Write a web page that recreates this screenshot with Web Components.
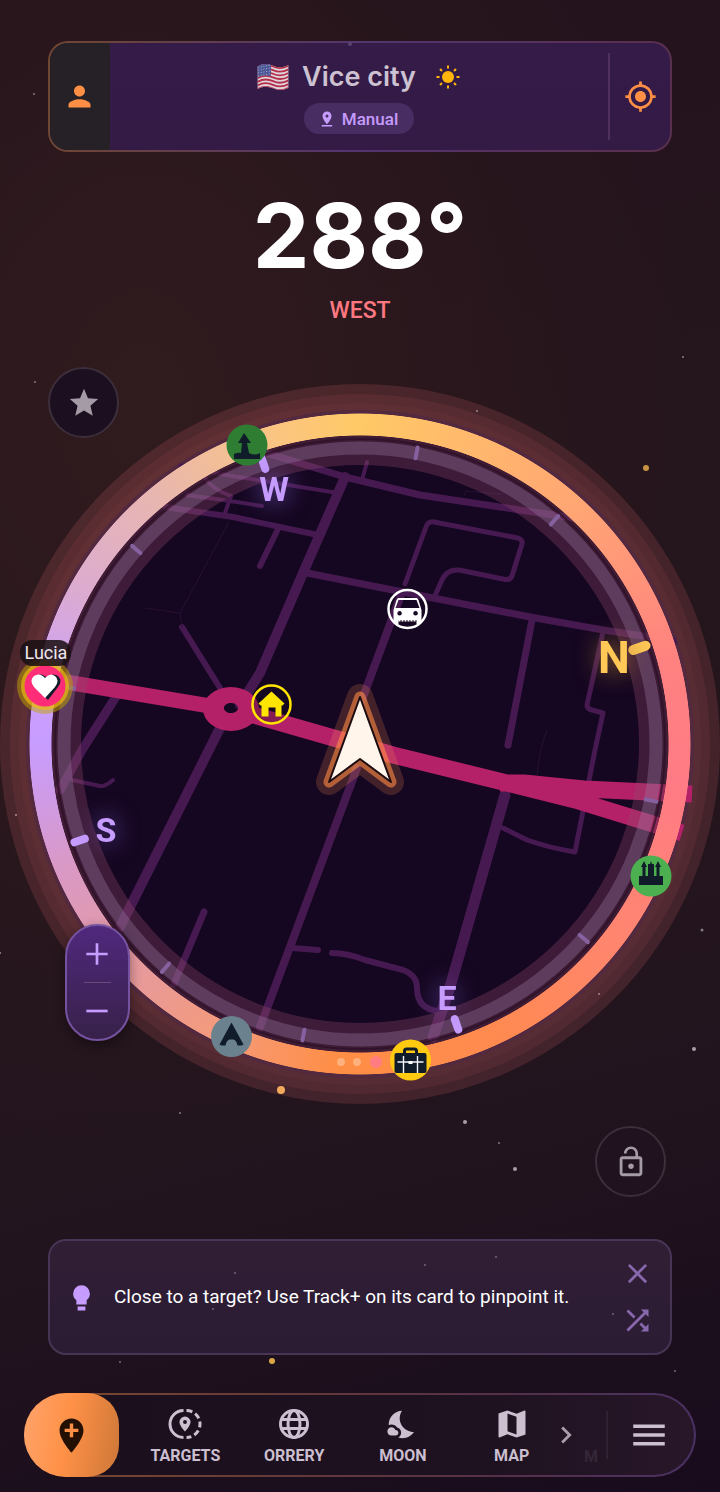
<!DOCTYPE html>
<html lang="en">
<head>
<meta charset="utf-8">
<meta name="viewport" content="width=device-width, initial-scale=1">
<title>Compass</title>
<style>
   body {
      margin: 0;
      background: #1b0d1b;
      font-family: Roboto, "Liberation Sans", sans-serif;
   }
</style>
</head>
<body>
<compass-app></compass-app>

<script>
// every glyph is drawn on a 24 unit grid
const ICONS = {
   person: '<path d="M12 12c2.21 0 4-1.79 4-4s-1.79-4-4-4-4 1.79-4 4 1.79 4 4 4zm0 2c-2.67 0-8 1.34-8 4v2h16v-2c0-2.66-5.33-4-8-4z"/>',
   locate: '<path d="M12 8c-2.21 0-4 1.79-4 4s1.79 4 4 4 4-1.79 4-4-1.79-4-4-4zm8.94 3A8.994 8.994 0 0 0 13 3.06V1h-2v2.06A8.994 8.994 0 0 0 3.06 11H1v2h2.06A8.994 8.994 0 0 0 11 20.94V23h2v-2.06A8.994 8.994 0 0 0 20.94 13H23v-2h-2.06zM12 19c-3.87 0-7-3.13-7-7s3.13-7 7-7 7 3.13 7 7-3.13 7-7 7z"/>',
   sun: '<circle cx="12" cy="12" r="6"/><path fill="none" stroke="currentColor" stroke-width="2" d="M12 .5v3M12 20.500v3M.5 12h3M20.500 12h3M4 4l2 2M18 18l2 2M4 20l2-2M18 6l2-2"/>',
   pin: '<path fill-rule="evenodd" d="M18 8c0-3.310-2.690-6-6-6S6 4.690 6 8c0 4.500 6 11 6 11s6-6.500 6-11zm-8 0a2 2 0 1 1 4 0 2 2 0 0 1-4 0zM5 20v2h14v-2H5z"/>',
   star: '<path d="M12 17.270 18.180 21l-1.640-7.030L22 9.240l-7.190-.610L12 2 9.190 8.630 2 9.240l5.460 4.730L5.820 21z"/>',
   unlock: '<path d="M12 17c1.100 0 2-.900 2-2s-.900-2-2-2-2 .900-2 2 .900 2 2 2zm6-9h-1V6c0-2.760-2.240-5-5-5S7 3.240 7 6h1.900c0-1.710 1.390-3.100 3.100-3.100 1.710 0 3.100 1.390 3.100 3.100v2H6c-1.100 0-2 .900-2 2v10c0 1.100.900 2 2 2h12c1.100 0 2-.900 2-2V10c0-1.100-.900-2-2-2zm0 12H6V10h12v10z"/>',
   bulb: '<path d="M12 2.500a6.500 6.500 0 0 0-6.500 6.500c0 2.300 1 3.800 2.500 5v3.500h8V14c1.500-1.200 2.500-2.700 2.500-5A6.500 6.500 0 0 0 12 2.500zM9 19h6v3H9z"/>',
   close: '<path d="M19 6.410 17.590 5 12 10.590 6.410 5 5 6.410 10.590 12 5 17.590 6.410 19 12 13.410 17.590 19 19 17.590 13.410 12z"/>',
   shuffle: '<path d="M10.590 9.170 5.410 4 4 5.410l5.170 5.170 1.420-1.410zM14.500 4l2.040 2.040L4 18.590 5.410 20 17.960 7.460 20 9.500V4h-5.500zm.330 9.410-1.410 1.410 3.130 3.130L14.500 20H20v-5.500l-2.040 2.040-3.130-3.130z"/>',
   addpin: '<path d="M12 2C8.130 2 5 5.130 5 9c0 5.250 7 13 7 13s7-7.750 7-13c0-3.870-3.130-7-7-7zm4 8h-3v3h-2v-3H8V8h3V5h2v3h3v2z"/>',
   targets: '<path fill="none" stroke="currentColor" stroke-width="2" d="M11 3a9 9 0 0 0 0 18"/><path fill="none" stroke="currentColor" stroke-width="2" stroke-dasharray="4 2.200" d="M13 3a9 9 0 0 1 0 18"/><path fill-rule="evenodd" d="M15.700 10.700a3.700 3.700 0 0 0-7.400 0c0 2.600 3.700 6.300 3.700 6.300s3.700-3.700 3.700-6.300zm-5 0a1.300 1.300 0 1 1 2.600 0 1.300 1.300 0 0 1-2.600 0z"/>',
   globe: '<g fill="none" stroke="currentColor" stroke-width="2"><circle cx="12" cy="12" r="9"/><ellipse cx="12" cy="12" rx="4" ry="9"/><path d="M3.500 9h17M3.500 15h17"/></g>',
   moon: '<path d="M11.100 12.080c-2.330-4.510-.5-8.480.530-10.070C6.270 2.200 1.980 6.590 1.980 12c0 .140.020.280.020.420.620-.270 1.290-.420 2-.420 1.660 0 3.180.830 4.100 2.150A4.010 4.010 0 0 1 11 18c0 1.520-.870 2.830-2.120 3.510.980.320 2.030.5 3.110.5 3.500 0 6.580-1.800 8.370-4.520-2.360.230-6.980-.970-9.260-5.410zM7 16h-.180C6.400 14.840 5.300 14 4 14c-1.660 0-3 1.340-3 3s1.340 3 3 3h3c1.100 0 2-.900 2-2s-.900-2-2-2z"/>',
   map: '<path d="m20.500 3-.160.030L15 5.100 9 3 3.360 4.900c-.210.070-.360.250-.360.480V20.500c0 .280.220.5.5.5l.160-.030L9 18.900l6 2.100 5.640-1.900c.210-.070.360-.250.360-.480V3.500c0-.280-.220-.5-.5-.5zM15 19l-6-2.110V5l6 2.110V19z"/>',
   next: '<path d="M10 6 8.590 7.410 13.170 12l-4.580 4.590L10 18l6-6z"/>',
   menu: '<path d="M3 18h18v-2H3v2zm0-5h18v-2H3v2zm0-7v2h18V6H3z"/>',
   plus: '<path d="M11 4h2v7h7v2h-7v7h-2v-7H4v-2h7z"/>',
   minus: '<path d="M4 11h16v2H4z"/>',
   flag: `<clipPath id="cloth"><path d="M1 4.500q5.500-3 11-.500t11-.500V19.500q-5.500 3-11 .5t-11 .5z"/></clipPath>
      <g clip-path="url(#cloth)"><path fill="#ded6dc" d="M0 0h24v24H0z"/>
      <g fill="none" stroke="#b62e4a" stroke-width="1.300"><path id="stripe" d="M1 5q5.500-3 11-.5t11-.5"/><use href="#stripe" y="2.600"/><use href="#stripe" y="5.200"/><use href="#stripe" y="7.800"/><use href="#stripe" y="10.400"/><use href="#stripe" y="13"/><use href="#stripe" y="15.600"/></g>
      <path fill="#4c5796" d="M0 2h10.500v9.500q-5-1.500-10.500 1z"/>
      <path fill="none" stroke="#aeb1d0" stroke-width=".7" stroke-dasharray=".7 1.200" d="M1.500 5.200l9-1.600M1.500 7.200l9-1.600M1.500 9.200l9-1.600M1.500 11.200l9-1.600"/></g>`
};

class UiIcon extends HTMLElement {
   constructor() {
      super();
      this.attachShadow({ mode: 'open' });
   }

   connectedCallback() {
      this.shadowRoot.innerHTML = `
         <style>
            :host { display: block; flex: none; width: var(--icon-size, 34px); height: var(--icon-size, 34px); }
            svg { display: block; width: 100%; height: 100%; fill: currentColor; }
         </style>
         <svg viewBox="0 0 24 24" aria-hidden="true">${ICONS[this.getAttribute('name')]}</svg>
      `;
   }
}

// x, y, radius, colour
const STARS = [
   [34, 94, 1, '#85777c'], [350, 44, 2, '#5b4372'], [683, 357, 1, '#8c7f88'], [35, 382, 1, '#85777c'],
   [646, 468, 3, '#c79243'], [16, 815, 1, '#a3979a'], [0, 953, 1, '#a3979a'], [702, 930, 1.5, '#857a83'],
   [694, 1049, 2, '#a79ea8'], [180, 1113, 1, '#85777c'], [465, 1122, 2, '#a79ea8'], [499, 1143, 1, '#85777c'],
   [515, 1169, 2, '#a79ea8'], [272, 1361, 3, '#dca545'], [120, 1362, 1, '#776c7c'], [675, 1371, 1, '#776c7c']
];

class StarField extends HTMLElement {
   constructor() {
      super();
      this.attachShadow({ mode: 'open' });
      const dots = STARS.map(([x, y, r, c]) => `<circle cx="${x}" cy="${y}" r="${r}" fill="${c}"/>`).join('');
      this.shadowRoot.innerHTML = `
         <style>
            :host { display: block; position: absolute; inset: 0; pointer-events: none; }
            svg { display: block; width: 100%; height: 100%; }
         </style>
         <svg viewBox="0 0 720 1492" preserveAspectRatio="xMidYMin slice" aria-hidden="true">${dots}</svg>
      `;
   }
}

class LocationBar extends HTMLElement {
   constructor() {
      super();
      this.attachShadow({ mode: 'open' });
      this.shadowRoot.innerHTML = `
         <style>
            :host {
               display: flex;
               min-height: 107px;
               border: 2px solid transparent;
               border-radius: 20px;
               overflow: hidden;
               background:
                  linear-gradient(#341b48, #341b46) padding-box,
                  linear-gradient(100deg, #704730, #53346f 50%, #5a2f4c) border-box;
            }
            button { border: 0; padding: 0; background: none; color: #ff8f45; display: grid; place-items: center; --icon-size: 33px; }
            .profile { width: 60px; padding-right: 2px; background: #262127; }
            .locate { width: 62px; margin: 10px 0; border-left: 2px solid #50315d; }
            .place { flex: 1; display: flex; flex-direction: column; align-items: center; justify-content: center; gap: 8px; }
            .name { display: flex; align-items: center; gap: 12px; padding-right: 2px; }
            h1 { margin: 0; padding-right: 8px; font: 600 27px/36px Inter, "Liberation Sans", sans-serif; color: #cdc2d2; }
            .sun { --icon-size: 24px; color: #ffb509; }
            .chip {
               display: flex; align-items: center; gap: 6px;
               padding: 0 16px 0 14px;
               height: 31px; border-radius: 16px;
               background: #482d62; color: #c79cff;
               font-weight: 500; font-size: 17px;
               --icon-size: 18px;
            }
         </style>
         <button class="profile" aria-label="Profile"><ui-icon name="person"></ui-icon></button>
         <div class="place">
            <div class="name">
               <ui-icon name="flag"></ui-icon>
               <h1><slot></slot></h1>
               <ui-icon class="sun" name="sun"></ui-icon>
            </div>
            <div class="chip"><ui-icon name="pin"></ui-icon><slot name="mode"></slot></div>
         </div>
         <button class="locate" aria-label="My location"><ui-icon name="locate"></ui-icon></button>
      `;
   }
}

class HeadingReadout extends HTMLElement {
   constructor() {
      super();
      this.attachShadow({ mode: 'open' });
      this.shadowRoot.innerHTML = `
         <style>
            :host { display: block; text-align: center; }
            .degrees { font-family: Inter, "Liberation Sans", sans-serif; font-size: 90px; line-height: 96px; font-weight: 700; color: #fff; }
            .direction { margin-top: 13px; font-size: 23px; line-height: 28px; color: #ff7780; font-weight: 500; }
         </style>
         <div class="degrees"><slot></slot></div>
         <div class="direction"><slot name="direction"></slot></div>
      `;
   }
}

class RoundButton extends HTMLElement {
   constructor() {
      super();
      this.attachShadow({ mode: 'open' });
   }

   connectedCallback() {
      this.shadowRoot.innerHTML = `
         <style>
            :host { display: block; width: 71px; }
            button {
               width: 71px; height: 71px; padding: 0;
               display: grid; place-items: center;
               border: 2px solid #3c2e3a; border-radius: 50%;
               background: var(--fill, #1d1020); color: #a59ba6;
            }
         </style>
         <button aria-label="${this.getAttribute('label')}"><slot></slot></button>
      `;
   }
}

class ZoomControl extends HTMLElement {
   constructor() {
      super();
      this.attachShadow({ mode: 'open' });
      this.shadowRoot.innerHTML = `
         <style>
            :host {
               display: flex; flex-direction: column; align-items: center;
               box-sizing: border-box; width: 65px; height: 117px;
               border: 2px solid #74529f; border-radius: 33px;
               background: linear-gradient(#50287d, #372149);
               box-shadow: 0 4px 12px #0006;
               --icon-size: 32px;
            }
            button { flex: 1; width: 100%; padding: 0; border: 0; background: none; color: #c79cff; display: grid; place-items: center; }
            hr { width: 27px; margin: 0; border: 0; border-top: 1px solid #6a4a78; }
         </style>
         <button aria-label="Zoom in"><ui-icon name="plus"></ui-icon></button>
         <hr>
         <button aria-label="Zoom out"><ui-icon name="minus"></ui-icon></button>
      `;
   }
}

class CompassDial extends HTMLElement {
   constructor() {
      super();
      this.attachShadow({ mode: 'open' });
      this.shadowRoot.innerHTML = `
         <style>
            :host { display: grid; aspect-ratio: 1; }
            svg, .ring { grid-area: 1 / 1; width: 100%; height: 100%; display: block; }
            /* the mask lifts the ring, so the markers need a layer too */
            .markers { z-index: 1; }
            ::slotted(*) { z-index: 2; }
            .ring {
               border-radius: 50%;
               background: conic-gradient(#ffc966, #ffa574 12%, #ff8180 21%, #ff7b85 27%, #ff8570 35%, #ff8a50 43%, #ff8e45 51%, #f59a7a 57%, #e59aa0 63%, #d999c8 69%, #c79cff 75%, #c99fff 77%, #dcabd0 83%, #e8b6b0 89%, #fbc580 96%, #ffc966);
               -webkit-mask: radial-gradient(closest-side, #0000 85.600%, #000 85.800%, #000 91.700%, #0000 91.900%);
               mask: radial-gradient(closest-side, #0000 85.600%, #000 85.800%, #000 91.700%, #0000 91.900%);
            }
            .roads { fill: none; stroke: #461a51; stroke-linecap: round; stroke-linejoin: round; }
            .highway { fill: none; stroke: #b52169; stroke-linejoin: round; }
            text { font-family: Roboto, "Liberation Sans", sans-serif; text-anchor: middle; }
            .cardinal { font-weight: 700; font-size: 34px; fill: #c79cff; filter: drop-shadow(0 0 12px #7a5cc4); }
            .north { font-size: 45px; fill: #ffc857; filter: drop-shadow(0 0 12px #9c7030); }
         </style>

         <svg viewBox="0 384 720 720" aria-hidden="true">
            <defs>
               <clipPath id="disc"><circle cx="360" cy="744" r="333"/></clipPath>
               <clipPath id="rim"><circle cx="360" cy="744" r="345"/></clipPath>
            </defs>
            <circle cx="360" cy="744" r="360" fill="#ff7882" fill-opacity=".15"/>
            <circle cx="360" cy="744" r="350" fill="#ff7882" fill-opacity=".08"/>
            <circle cx="360" cy="744" r="341" fill="#ff7882" fill-opacity=".04"/>
            <circle cx="360" cy="744" r="334" fill="#532940"/>
            <circle cx="360" cy="744" r="309" fill="#150621"/>

            <g class="roads" clip-path="url(#disc)">
               <path stroke-width="10" d="M345 477 303 573 260 673 240 705M220 728 120 927"/>
               <path stroke-width="7" d="M250 448 345 477 420 495 580 519"/>
               <path stroke-width="4" d="M180 465 220 474 338 493M187 495 230 501 262 506M205 478q8 12 26 18l-6 17M367 462l-5 18"/>
               <path stroke-width="6" d="M165 507 233 517 318 535M277 531 260 566M182 627 220 688"/>
               <path stroke-width="1" stroke="#291135" d="M229 522 180 613 145 608M180 613l2 14M464 496l2-5 35 3M547 730q-8 20-10 45"/>
               <path stroke-width="7" d="M307 573 433 598 530 617 603 630 677 641"/>
               <path stroke-width="5" d="M405 584 426 527q2-6 8-5l84 16q5 2 4 6l-10 32q-2 5-9 3l-44-9q-13-1-18 12l-7 16"/>
               <path stroke-width="8" d="M402 592 360 705M357 768 290 947 260 1027"/>
               <path stroke-width="7" d="M532 620 508 745M204 912 174 984"/>
               <path stroke-width="5" d="M603 632 587 705q0 4 5 5l11 3-8 37-20 102q-25-4-48-12l-24-12"/>
               <path stroke-width="11" d="M505 795 495 830 450 987 433 1037"/>
               <path stroke-width="6" d="M332 953q15 0 33 7l38 10q14 5 14 18 0 21 21 23M292 948l26 2"/>
               <path stroke-width="9" d="M117 695 82 750 60 790"/>
               <path stroke-width="4" d="M72 780l28 6q5 1 13-6"/>
            </g>

            <g class="highway" clip-path="url(#rim)">
               <path stroke-width="15" d="M66 682 210 706"/>
               <path stroke-width="17" d="M250 714 393 755 507 783 575 800 682 833M500 783l24 0 60 6 108 5"/>
               <path fill="#b52169" stroke="none" fill-rule="evenodd" d="M203 709a28 22 0 1 1 56 0 28 22 0 1 1-56 0zM224 709a7 5 0 1 0 14-2 7 5 0 1 0-14 2z"/>
            </g>

            <g fill="none">
               <circle cx="360" cy="744" r="306" stroke="#6b344a" stroke-opacity=".5" stroke-width="6"/>
               <circle cx="360" cy="744" r="305" stroke="#2a1028" stroke-width="2" stroke-opacity=".7"/>
               <circle cx="360" cy="744" r="291" stroke="#91486a" stroke-opacity=".34" stroke-width="24"/>
               <circle cx="360" cy="744" r="296" stroke="#9a7aa4" stroke-opacity=".34" stroke-width="13"/>
            </g>
         </svg>

         <div class="ring"></div>

         <svg class="markers" viewBox="0 384 720 720" role="img" aria-label="Compass with targets">
            <g class="ticks" stroke-linecap="round"></g>
            <g class="cardinal">
               <text x="274" y="501">W</text>
               <text x="106" y="842">S</text>
               <text x="447" y="1010">E</text>
            </g>
            <text class="cardinal north" x="614" y="673">N</text>

            <!-- heading arrow -->
            <g stroke-linejoin="round">
               <path d="M360 697 391 782 360 759 329 782z" fill="none" stroke="#ff9150" stroke-opacity=".2" stroke-width="26"/>
               <path d="M360 697 391 782 360 759 329 782z" fill="none" stroke="#ff8a45" stroke-opacity=".6" stroke-width="11"/>
               <path d="M360 697 391 782 360 759 329 782z" fill="#fff5eb" stroke="#1c0d12" stroke-width="2"/>
            </g>

            <!-- progress dots -->
            <circle cx="341" cy="1062" r="4" fill="#ffb17d"/>
            <circle cx="357" cy="1062" r="4" fill="#ffb17d"/>
            <circle cx="376" cy="1062" r="6" fill="#ff7d80"/>

            <!-- statue -->
            <g transform="translate(247 445)">
               <circle r="20.500" fill="#2e7d32"/>
               <path fill="#111c2b" d="M-3-12 4-2H0L2 8q6 3 11 0v6h-26V9q4-2 7-1l1-10h-4z"/>
            </g>

            <!-- parked car -->
            <g transform="translate(407.500 609)">
               <circle r="19" fill="none" stroke="#fff" stroke-width="2.500"/>
               <path fill="#fff" fill-rule="evenodd" d="M-9-11H9q1 0 2 2l3 10v12q0 2-2 2H9V11H-9v4h-3q-2 0-2-2V1l3-10q1-2 2-2zM-9-9l-3 8h24L9-9zM-8 2a2.300 2.300 0 1 0 .1 0zM8 2a2.300 2.300 0 1 0 .1 0z"/>
               <path d="M-9 11.500H9" stroke="#fff" stroke-width="2" stroke-dasharray="2 1"/>
            </g>

            <!-- home -->
            <g transform="translate(271.500 704.500)">
               <circle r="19" fill="#1a0a22" fill-opacity=".3" stroke="#ffe500" stroke-width="2.500"/>
               <path fill="#ffe500" d="M0-13 13-1 11 1H10V12H4V3H-3v9h-7V1h-1l-2-2z"/>
            </g>

            <!-- castle -->
            <g transform="translate(651 876)">
               <circle r="20.500" fill="#4caf50"/>
               <path fill="#111c2b" d="M-12 0h3.500v-9H-10l3-6 3 6h-1.500V0H-3v-12h2l1-3 1 3h2V0h2.500v-9H4l3-6 3 6H8.500V0H12v9h-24z"/>
            </g>

            <!-- luggage -->
            <g transform="translate(410.500 1060)">
               <circle r="20.500" fill="#ffca10"/>
               <path fill="none" stroke="#111c2b" stroke-width="3" d="M-6-6v-3q0-2 2-2h8q2 0 2 2v3"/>
               <rect x="-16" y="-7" width="32" height="20" rx="2" fill="#111c2b"/>
               <path fill="none" stroke="#f3f5f7" stroke-width="1.400" d="M-13 2h26M-7-4v17M7-4v17"/>
               <path fill="#fff" d="M-2 1h4v3h-4z"/>
            </g>

            <!-- summit -->
            <g transform="translate(231.500 1036.500)">
               <circle r="20.500" fill="#6c818e"/>
               <path fill="#111c2b" d="M0-14 12 8q-1 1-3 1H6Q5 4 2 3h-4q-3 1-4 6h-3q-2 0-3-1z"/>
            </g>

            <!-- tracked person -->
            <g transform="translate(45 686)">
               <circle r="28" fill="#bfa300" fill-opacity=".5"/>
               <circle r="24" fill="#f5bb13" fill-opacity=".65"/>
               <circle r="20.500" fill="#ff2d78"/>
               <path fill="#111c2b" d="M3 14-9 2q-6-8 0-12 6-4 11 2 6-6 11-2 5 5 0 11z"/>
               <path fill="#fff" d="M0 12-11 1q-5-7 0-11 6-4 11 2 5-6 10-2 5 4 0 11z"/>
            </g>
            <rect x="20" y="640" width="51" height="26" rx="12" fill="#1b1114" fill-opacity=".88"/>
            <text x="46" y="659" font-size="18" fill="#eee7ea">Lucia</text>

            <circle cx="281" cy="1090" r="4" fill="#f2aa5d"/>
            <circle cx="477" cy="411" r="1" fill="#a4888c"/>
            <circle cx="599" cy="994" r="1" fill="#a4888c"/>
         </svg>
         <slot></slot>
      `;
   }

   connectedCallback() {
      this._drawTicks(Number(this.getAttribute('heading')));
   }

   // one tick each 30 degrees, the four cardinals are thicker
   _drawTicks(heading) {
      let ticks = '';
      for (let bearing = 0; bearing < 360; bearing += 30) {
         const turn = bearing - heading;
         const cardinal = bearing % 90 === 0;
         const color = bearing === 0 ? '#ffc857' : cardinal ? '#c79cff' : '#85619f';
         const width = bearing === 0 ? 10 : cardinal ? 8 : 4;
         ticks += `<path d="M360 442V${bearing === 0 ? 455 : 453}" transform="rotate(${turn} 360 744)" stroke="${color}" stroke-width="${width}"/>`;
      }
      this.shadowRoot.querySelector('.ticks').innerHTML = ticks;
   }
}

class TipCard extends HTMLElement {
   constructor() {
      super();
      this.attachShadow({ mode: 'open' });
      this.shadowRoot.innerHTML = `
         <style>
            :host {
               position: relative;
               display: flex; align-items: center; gap: 17px;
               box-sizing: border-box; min-height: 116px;
               padding: 0 16px;
               border: 2px solid #483455; border-radius: 18px;
               background: linear-gradient(#301e34, #2b1c34);
               color: #fff;
            }
            .bulb { --icon-size: 31px; color: #c79cff; }
            p { flex: 1; margin: 0; font-size: 19px; line-height: 26px; }
            .actions { display: flex; flex-direction: column; gap: 14px; --icon-size: 33px; }
            button { padding: 0; border: 0; background: none; color: #8868ad; }
            .dust { position: absolute; inset: 0; width: 100%; height: 100%; fill: #756778; }
         </style>
         <svg class="dust" viewBox="0 0 620 112" aria-hidden="true">
            <circle cx="185" cy="32" r="1"/><circle cx="375" cy="24" r="1"/><circle cx="446" cy="16" r="1"/><circle cx="163" cy="68" r="1"/><circle cx="563" cy="73" r="1"/>
         </svg>
         <ui-icon class="bulb" name="bulb"></ui-icon>
         <p><slot></slot></p>
         <div class="actions">
            <button aria-label="Dismiss"><ui-icon name="close"></ui-icon></button>
            <button aria-label="Another tip"><ui-icon name="shuffle"></ui-icon></button>
         </div>
      `;
   }
}

class NavItem extends HTMLElement {
   constructor() {
      super();
      this.attachShadow({ mode: 'open' });
   }

   connectedCallback() {
      this.shadowRoot.innerHTML = `
         <style>
            :host { display: block; flex: 1; --icon-size: ${this.getAttribute('size') || 36}px; }
            a {
               display: flex; flex-direction: column; align-items: center;
               color: #cbbfd0; text-decoration: none;
               font-size: 16px; line-height: 20px; font-weight: 700;
            }
            .glyph { height: 36px; display: grid; place-items: center; margin-bottom: 4px; }
         </style>
         <a href="#${this.getAttribute('icon')}">
            <span class="glyph"><ui-icon name="${this.getAttribute('icon')}"></ui-icon></span>
            <slot></slot>
         </a>
      `;
   }
}

class NavBar extends HTMLElement {
   constructor() {
      super();
      this.attachShadow({ mode: 'open' });
      this.shadowRoot.innerHTML = `
         <style>
            :host {
               display: flex; align-items: stretch;
               height: 80px;
               border: 2px solid transparent; border-radius: 42px;
               background:
                  linear-gradient(90deg, #1b0f1e, #1e1220 70%, #281729) padding-box,
                  linear-gradient(90deg, #7d492f, #673b37 35%, #553148 70%, #4a3163) border-box;
            }
            button { border: 0; padding: 0; background: none; color: #cbbfd0; display: grid; place-items: center; }
            .add {
               width: 95px; margin: -2px 0 -2px -2px;
               border-radius: 42px 32px 32px 42px;
               background: linear-gradient(100deg, #ffa46c, #ff9147 45%, #cd7738);
               color: #241003; --icon-size: 41px;
            }
            nav { flex: 1; display: flex; align-items: center; padding: 2px 0 0 12px; }
            .next { width: 24px; margin-left: -12px; --icon-size: 34px; color: #a99dac; place-content: center; }
            .cut {
               width: 28px; padding: 52px 8px 0 0; box-sizing: border-box; overflow: hidden;
               text-align: right; font-size: 16px; line-height: 20px; font-weight: 700; color: #352738;
            }
            .menu { width: 88px; margin: 16px 0; border-left: 2px solid #2f2131; --icon-size: 42px; padding-right: 4px; }
         </style>
         <button class="add" aria-label="Add pin"><ui-icon name="addpin"></ui-icon></button>
         <nav><slot></slot></nav>
         <button class="next" aria-label="More"><ui-icon name="next"></ui-icon></button>
         <div class="cut"><slot name="cut"></slot></div>
         <button class="menu" aria-label="Menu"><ui-icon name="menu"></ui-icon></button>
      `;
   }
}

class CompassApp extends HTMLElement {
   constructor() {
      super();
      this.attachShadow({ mode: 'open' });
      this.shadowRoot.innerHTML = `
         <style>
            :host {
               position: relative;
               display: flex; flex-direction: column;
               box-sizing: border-box; min-height: 100vh;
               padding: 41px 0 15px;
               overflow: hidden;
               background:
                  radial-gradient(ellipse 75% 50% at 20% 27%, #301b1e, #301b1e00),
                  linear-gradient(165deg, #23121c, #25151c 45%, #22141e 75%, #180b1c);
            }
            location-bar, tip-card { margin-left: 48px; margin-right: 48px; }
            heading-readout { margin-top: 36px; }
            compass-dial { position: relative; margin-top: 59px; }
            .favourite { position: absolute; left: 48px; top: -17px; --fill: #1b0f20; }
            zoom-control { position: absolute; left: 9%; top: 75%; }
            .lock { align-self: flex-end; margin: 22px 54px 42px; --fill: #20121e; }
            nav-bar { margin: 38px 24px 0; }
         </style>
         <star-field></star-field>
         <location-bar>Vice city<span slot="mode">Manual</span></location-bar>
         <heading-readout>288°<span slot="direction">WEST</span></heading-readout>
         <compass-dial heading="289">
            <round-button class="favourite" label="Favourite"><ui-icon name="star"></ui-icon></round-button>
            <zoom-control></zoom-control>
         </compass-dial>
         <round-button class="lock" label="Unlock rotation"><ui-icon name="unlock"></ui-icon></round-button>
         <tip-card>Close to a target? Use Track+ on its card to pinpoint it.</tip-card>
         <nav-bar>
            <nav-item icon="targets">TARGETS</nav-item>
            <nav-item icon="globe">ORRERY</nav-item>
            <nav-item icon="moon" size="33">MOON</nav-item>
            <nav-item icon="map">MAP</nav-item>
            <span slot="cut">M</span>
         </nav-bar>
      `;
   }
}

customElements.define('ui-icon', UiIcon);
customElements.define('star-field', StarField);
customElements.define('location-bar', LocationBar);
customElements.define('heading-readout', HeadingReadout);
customElements.define('round-button', RoundButton);
customElements.define('zoom-control', ZoomControl);
customElements.define('compass-dial', CompassDial);
customElements.define('tip-card', TipCard);
customElements.define('nav-item', NavItem);
customElements.define('nav-bar', NavBar);
customElements.define('compass-app', CompassApp);
</script>
</body>
</html>
